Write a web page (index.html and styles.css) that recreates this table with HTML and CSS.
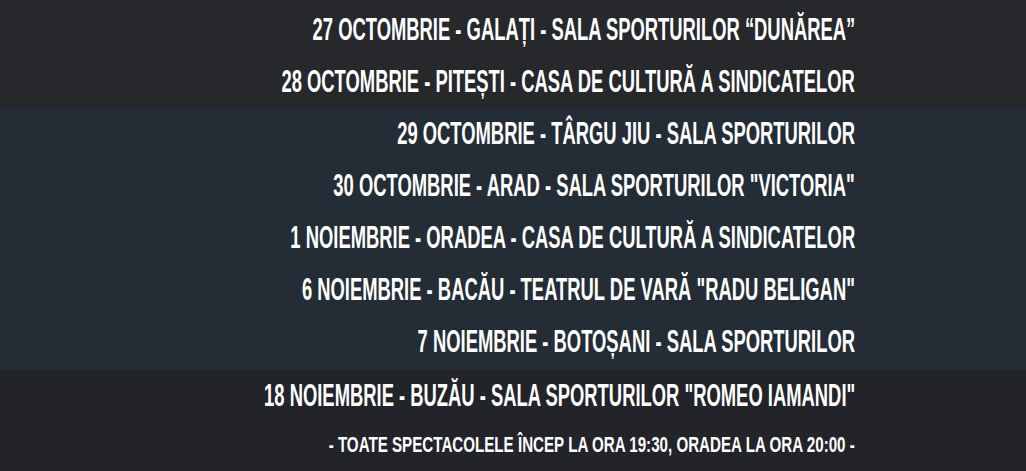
FILE: index.html
```html
<!DOCTYPE html>
<html lang="ro">
<head>
<meta charset="utf-8">
<link rel="stylesheet" href="styles.css">
</head>
<body>
<div class="page">
  <section class="band band-dark band-top">
    <p class="row"><span class="txt">27 OCTOMBRIE - GALAȚI - SALA SPORTURILOR “DUNĂREA”</span></p>
    <p class="row"><span class="txt">28 OCTOMBRIE - PITEȘTI - CASA DE CULTURĂ A SINDICATELOR</span></p>
  </section>
  <section class="band band-blue">
    <p class="row"><span class="txt">29 OCTOMBRIE - TÂRGU JIU - SALA SPORTURILOR</span></p>
    <p class="row"><span class="txt">30 OCTOMBRIE - ARAD - SALA SPORTURILOR "VICTORIA"</span></p>
    <p class="row"><span class="txt">1 NOIEMBRIE - ORADEA - CASA DE CULTURĂ A SINDICATELOR</span></p>
    <p class="row"><span class="txt">6 NOIEMBRIE - BACĂU - TEATRUL DE VARĂ "RADU BELIGAN"</span></p>
    <p class="row"><span class="txt">7 NOIEMBRIE - BOTOȘANI - SALA SPORTURILOR</span></p>
  </section>
  <section class="band band-dark2">
    <p class="row"><span class="txt">18 NOIEMBRIE - BUZĂU - SALA SPORTURILOR "ROMEO IAMANDI"</span></p>
    <p class="row note"><span class="txt">- TOATE SPECTACOLELE ÎNCEP LA ORA 19:30, ORADEA LA ORA 20:00 -</span></p>
  </section>
</div>
</body>
</html>
```

FILE: styles.css
```css
html, body {
  margin: 0;
  padding: 0;
  background: #232429;
}
.page {
  width: 1026px;
  height: 471px;
  overflow: hidden;
  font-family: "Liberation Sans", Arial, sans-serif;
  font-weight: 700;
  color: #ffffff;
}
.band {
  display: flex;
  flex-direction: column;
}
.band-dark { background: #26282c; }
.band-top { padding-top: 4px; }
.band-blue {
  background: #242d36;
  padding-bottom: 2px;
}
.band-dark2 {
  background: #232429;
  height: 101px;
}
.row {
  margin: 0;
  height: 52px;
  flex: none;
  display: flex;
  align-items: center;
  justify-content: flex-end;
  padding-right: 171px;
  font-size: 31.5px;
  line-height: 1;
  white-space: nowrap;
}
.txt {
  display: inline-block;
  transform: scaleX(0.584);
  transform-origin: right center;
}
.row.note {
  height: 47px;
  font-size: 22.5px;
}
.row.note .txt {
  transform: scaleX(0.673);
}
```
